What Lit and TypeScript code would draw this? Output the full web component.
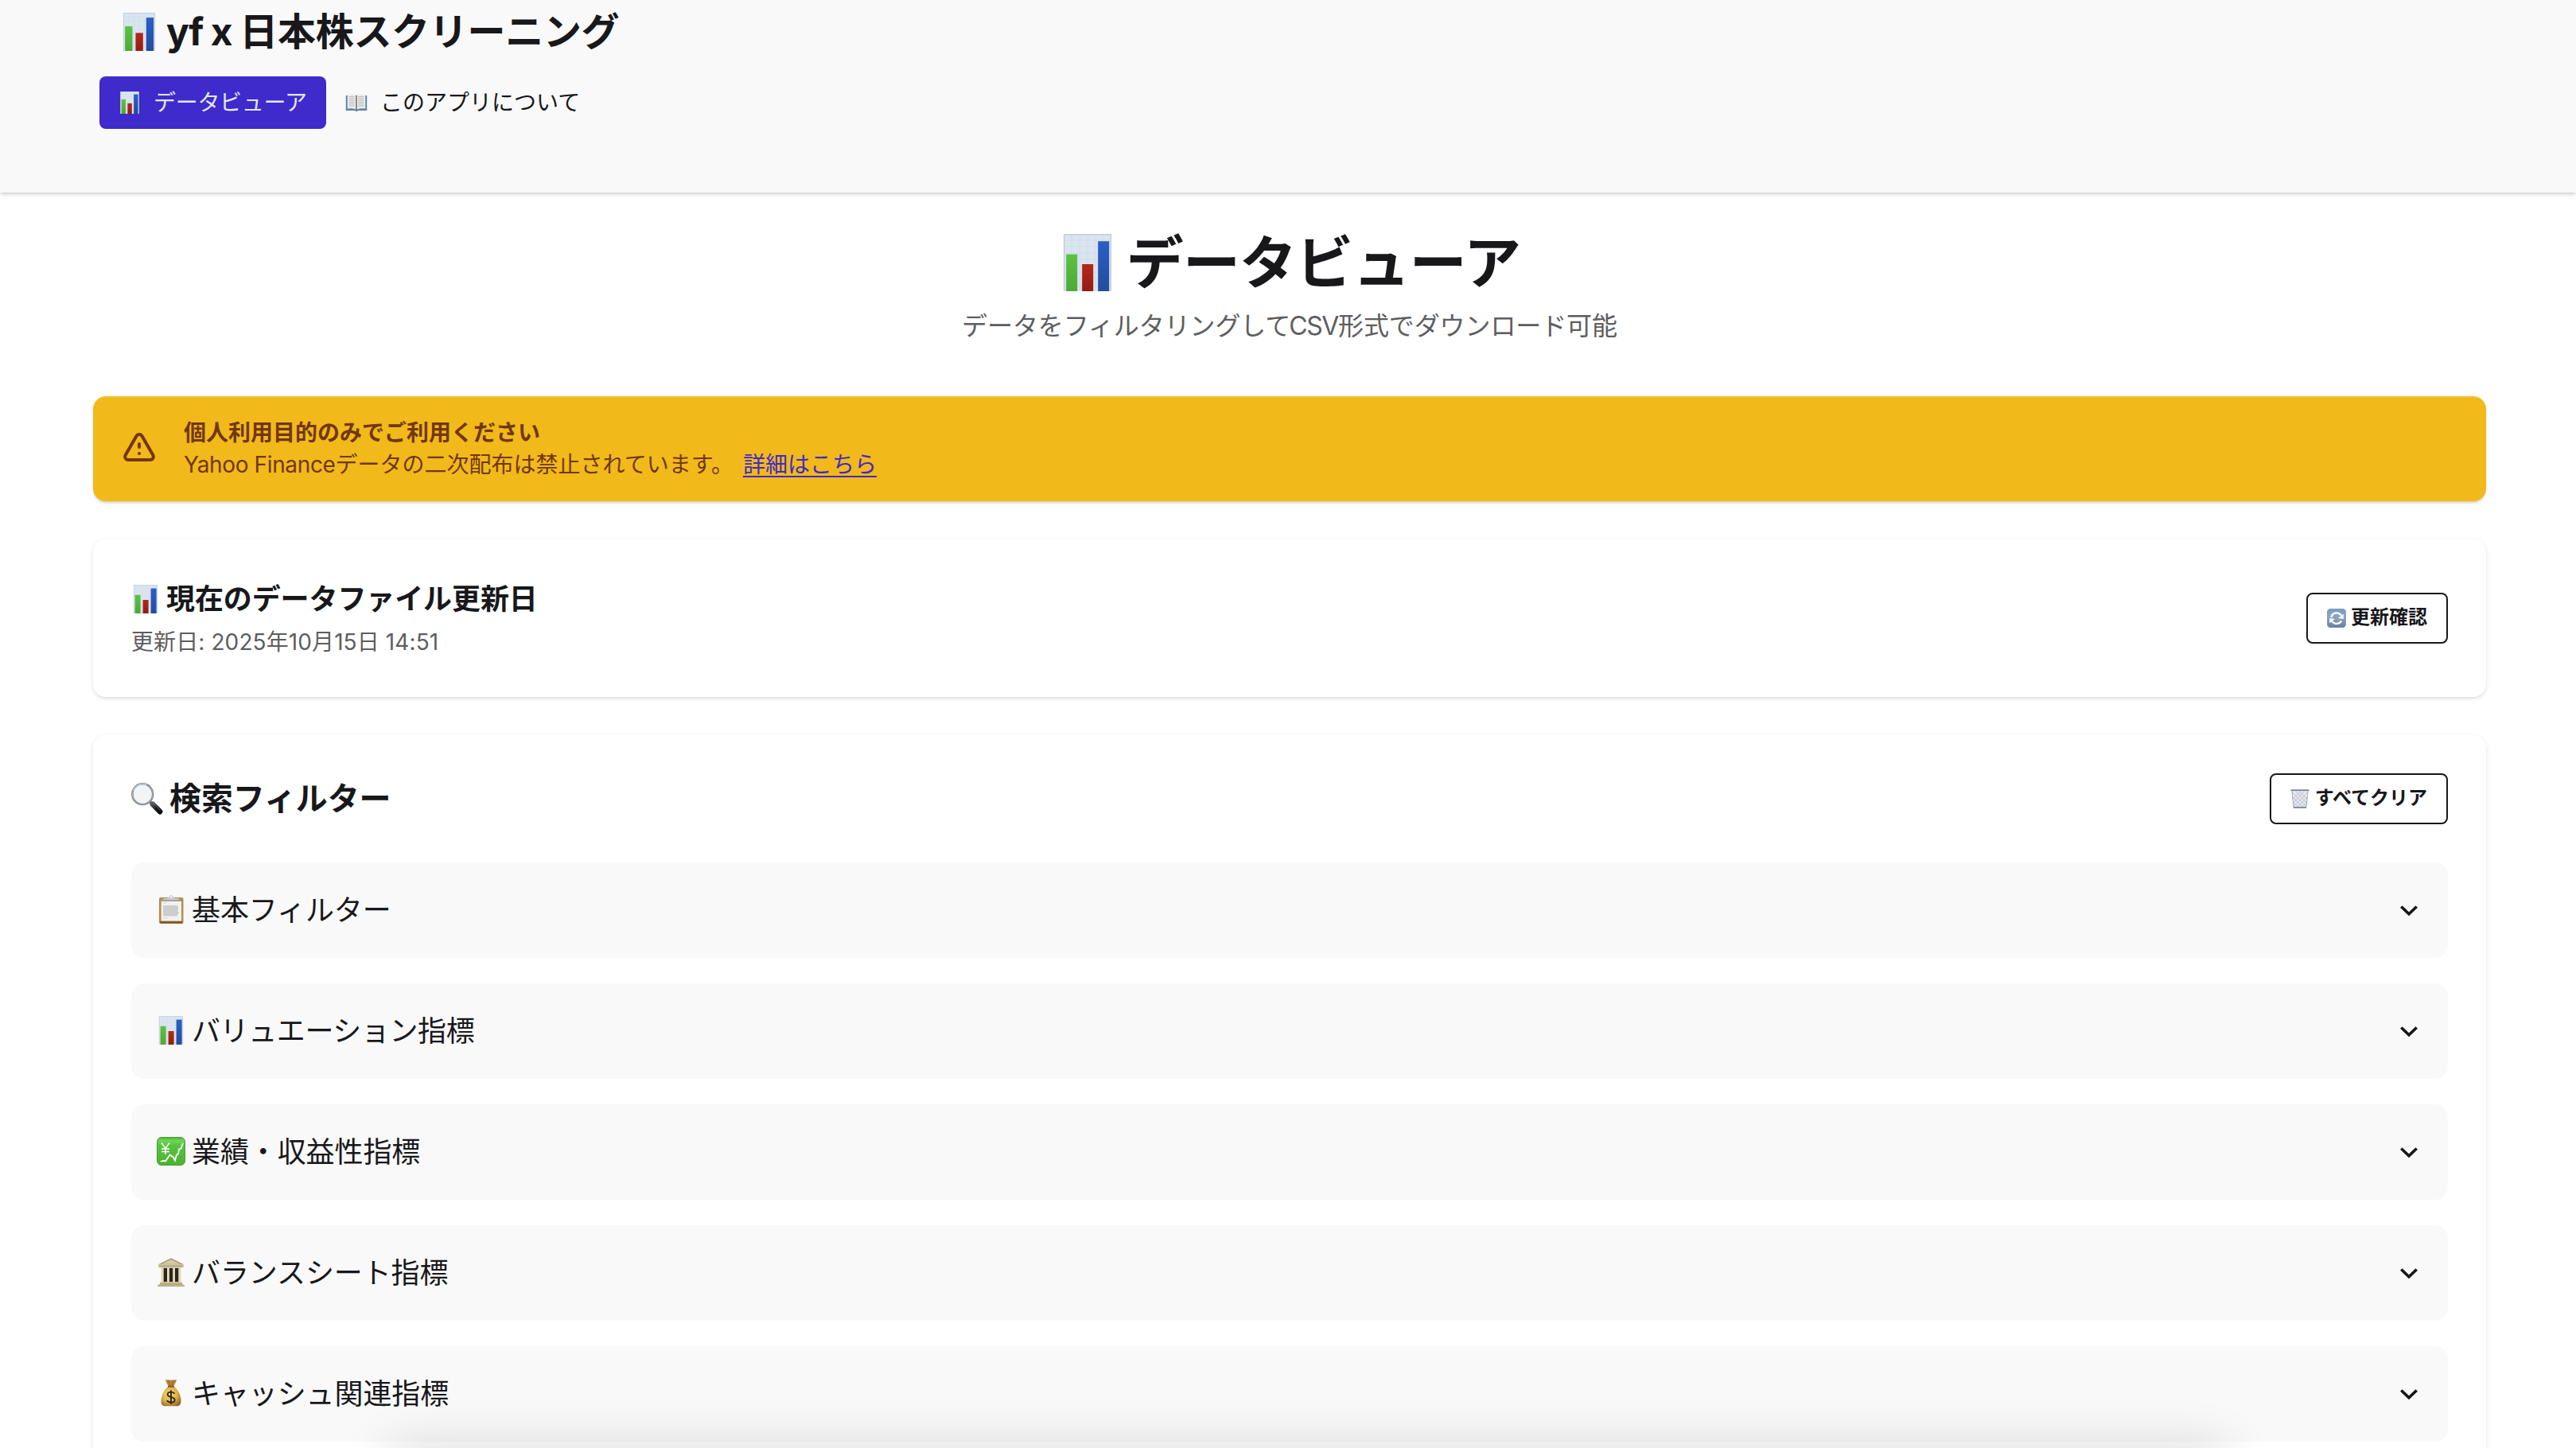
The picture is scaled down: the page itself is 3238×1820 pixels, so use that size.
import { LitElement, html, css, svg, nothing } from "lit";
import { customElement, property } from "lit/decorators.js";
import { classMap } from "lit/directives/class-map.js";

type IconName = "chart" | "book" | "refresh" | "trash" | "search" | "clipboard" | "yen" | "bank" | "money";

/* Every icon is drawn on a 36 x 36 grid. */
const ICONS: Record<IconName, unknown> = {
  chart: svg`
    <rect x="3" y="0" width="30" height="36" fill="#dbe5f0"/>
    <path d="M3 4h30M3 8h30M3 12h30M3 16h30M3 20h30M3 24h30M3 28h30M3 32h30M8 0v36M13 0v36M18 0v36M23 0v36M28 0v36" stroke="#cbdbeb" stroke-width=".4"/>
    <path d="M3.3 36V.4H32.7V36" fill="none" stroke="#c3ccd6" stroke-width=".7"/>
    <rect x="4.6" y="12.8" width="7" height="23.2" fill="url(#g)"/>
    <rect x="14.6" y="19" width="7" height="17" fill="url(#r)"/>
    <rect x="24.6" y="4.6" width="7" height="31.4" fill="url(#b)"/>
    <defs>
      <linearGradient id="g" x2="0" y2="1"><stop stop-color="#59c441"/><stop offset="1" stop-color="#4fa837"/></linearGradient>
      <linearGradient id="r" x2="0" y2="1"><stop stop-color="#b5281a"/><stop offset="1" stop-color="#941c12"/></linearGradient>
      <linearGradient id="b" x2="0" y2="1"><stop stop-color="#2a5fc9"/><stop offset="1" stop-color="#234c9c"/></linearGradient>
    </defs>`,
  book: svg`
    <path d="M1 6.500h34v24.500H21l-3 1.500-3-1.500H1z" fill="#4f88ae"/>
    <path d="M3.500 5c5-1 10.500-1 14.500 1 4-2 9.500-2 14.500-1v23c-5-.800-10.500-.800-14.500 1.500C14 27.200 8.500 27.200 3.500 28z" fill="#eeedec"/>
    <path d="M3.500 28.500c5-1 10.500-.800 14.500 1.500 4-2.300 9.500-2.500 14.500-1.500" fill="none" stroke="#85888b" stroke-width="1.400"/>
    <path d="M18 6v24" stroke="#6f6f6f" stroke-width="2"/>
    <path d="M6 8.500q5-1 9 0M6 11.500q5-1 9 0M6 14.500q5-1 9 0M6 17.500q5-1 9 0M6 20.500q5-1 9 0M6 23.500q5-1 9 0M21 8.500q5-1 9 0M21 11.500q5-1 9 0M21 14.500q5-1 9 0M21 17.500q5-1 9 0M21 20.500q5-1 9 0M21 23.500q5-1 9 0" stroke="#b0b0b0" fill="none" stroke-width="1.200"/>`,
  refresh: svg`
    <defs><linearGradient id="f" x2="0" y2="1"><stop stop-color="#7c9cc2"/><stop offset=".45" stop-color="#8ba5c3"/><stop offset="1" stop-color="#667f9f"/></linearGradient></defs>
    <rect x=".5" y=".5" width="35" height="35" rx="6.500" fill="url(#f)" stroke="#6885a8"/>
    <path d="M9 13C12.500 7 22 6 27 13M27 23C23.500 29.500 14 30.500 9 23.500" fill="none" stroke="#fff" stroke-width="3.600"/>
    <path d="M31.500 9.500l-.500 9.500-10-1.500zM4.500 27l.500-9.500 10 1.500z" fill="#fff" transform="translate(0 .500)"/>
    <path d="M6.500 16c.500-3 2-5 4-6.500l2 3c-1.300 1-2 2-2.500 4z" fill="#fff"/>`,
  trash: svg`
    <path d="M2 2h32l-3.500 33H5.500z" fill="#e8eaee"/>
    <path d="M4 6l26 27M4 14l19 20M10 4l21 22M17 4l15 15M5 24l11 11M32 6L6 33M32 14L13 34M26 4L5 26M19 4L4 19M31 24L20 35" stroke="#a5abb3" stroke-width="1"/>
    <path d="M3 3l3 31h24l3-31" fill="none" stroke="#a0a8b4" stroke-width="1.400"/>
    <path d="M.800 1.800h34.400" stroke="#7787a0" stroke-width="2.800"/>
    <path d="M6 34.500h24" stroke="#75869e" stroke-width="2.600"/>`,
  search: svg`
    <defs><linearGradient id="h" x2="1" y2="1"><stop stop-color="#56595f"/><stop offset=".5" stop-color="#1d1f23"/><stop offset="1" stop-color="#0c0d0f"/></linearGradient></defs>
    <path d="M21 21l4 4" stroke="#85898f" stroke-width="2.500"/>
    <path d="M24 24l8.500 8.500" stroke="url(#h)" stroke-width="6" stroke-linecap="round"/>
    <path d="M24.500 22.500l8.500 8.500" stroke="#74777d" stroke-width=".800"/>
    <circle cx="12.800" cy="12.800" r="11.600" fill="#f3f4f5" stroke="#74787f" stroke-width="2.200"/>
    <path d="M2.500 8.500A11.600 11.600 0 0117 2" fill="none" stroke="#b5c9e8" stroke-width="1.400"/>
    <circle cx="12.800" cy="12.800" r="11.600" fill="none" stroke="#d5dae2" stroke-width=".600"/>`,
  clipboard: svg`
    <rect x="3" y="3" width="30.500" height="33" rx="2" fill="#b58b4c"/>
    <rect x="4" y="33.300" width="28.500" height="2.300" rx="1" fill="#7c5227"/>
    <rect x="5.600" y="5.500" width="25.400" height="27" fill="#f1f1f1"/>
    <path d="M5.600 5.500h25.400v2.200H5.600z" fill="#8e8a84"/>
    <path d="M8 13h18v2h1v3h-.500v3h1v3H26v2.500H8z" fill="#cdcdcd"/>
    <path d="M8 10h4M8 29h6" stroke="#d4d4d4" stroke-width="1"/>
    <path d="M8 6.200V4.400c3 0 6-.400 7.500-1.400a2.700 2.700 0 015 0c1.500 1 4.500 1.400 7.500 1.400v1.800z" fill="#c9d0d9"/>
    <circle cx="18" cy="2.600" r="1.900" fill="#f7f7f7" stroke="#b3bfce" stroke-width="1"/>`,
  yen: svg`
    <defs><linearGradient id="y" x2="0" y2="1"><stop stop-color="#4fb437"/><stop offset=".12" stop-color="#6fd457"/><stop offset=".3" stop-color="#56c33e"/><stop offset="1" stop-color="#4eb133"/></linearGradient></defs>
    <rect x=".5" y=".5" width="35" height="35" rx="5.500" fill="url(#y)" stroke="#4a9f33"/>
    <path d="M6 7.500l5 7 5-7M11 14.500V22M6 15h10M6 18.500h10" fill="none" stroke="#fff" stroke-width="1.500"/>
    <path d="M5 31l3-1 3 .500 5.500-8 4.500 3 2 4 2-7 2-1 1-6 2.500-1L33 8" fill="none" stroke="#fff" stroke-width="1.800"/>`,
  bank: svg`
    <path d="M6 12h24v20H6z" fill="#c5bb95"/>
    <path d="M8.500 13h4.500v17H8.500zM15.800 13h4.500v17h-4.500zM23 13h4.500v17H23z" fill="#2b261c"/>
    <path d="M13 12h2.800v19H13zM20.300 12H23v19h-2.700zM5.500 12h3v19h-3zM27.500 12h3v19h-3z" fill="#e2dbbc"/>
    <path d="M18 .200L34.500 8.500H1.500z" fill="#a89c74"/>
    <path d="M18 2.200L29.500 7.800H6.500z" fill="#d6cda8"/>
    <path d="M2.500 8.500h31v3.800h-31z" fill="#cdc39c"/><path d="M2.500 10.200h31" stroke="#978b64" stroke-width=".800"/>
    <path d="M4 30.500h28V33h1.500v1H35v2H1v-2h1.500v-1H4z" fill="#c8be97"/>
    <path d="M4 33h28M1 35.800h34" stroke="#8f835b" stroke-width=".800"/>`,
  money: svg`
    <defs><radialGradient id="m" cx=".42" cy=".4" r=".65"><stop stop-color="#f3dc76"/><stop offset=".6" stop-color="#dcb148"/><stop offset="1" stop-color="#9c6c2a"/></radialGradient></defs>
    <path d="M11 .800c3 1.400 4 .200 7 1 3-.800 4 .400 7-1-.500 4-3 6-3.500 9h-7C14 7 11.500 5 11 .800z" fill="#bd8539"/>
    <path d="M15 2l2 7M21 2l-1.800 7" stroke="#7f5421" stroke-width=".800"/>
    <path d="M14.500 9.500h7C26 13 30.500 20 30.500 28c0 4.500-2 6.300-5 6.300H10.500c-3 0-5-1.800-5-6.300 0-8 4.500-15 9-18.500z" fill="url(#m)"/>
    <path d="M14 9.800h8" stroke="#87592a" stroke-width="1.800"/>
    <path d="M22.500 18.800c-1-1.600-2.500-2.200-4.500-2.200-2.700 0-4.300 1.300-4.300 3.200 0 4.500 9 2 9 6.600 0 2-1.800 3.300-4.700 3.300-2.300 0-4.200-.900-5-2.600M18 14.500v17.200" stroke="#2c2a24" stroke-width="1.900" fill="none"/>`,
};

@customElement("emoji-icon")
export class EmojiIcon extends LitElement {
  @property() name: IconName = "chart";
  static styles = css`
    :host { display: block; flex: none; width: 36px; height: 36px; }
    .art { display: block; width: 100%; height: 100%; }
  `;
  render() {
    return html`<svg class="art" viewBox="0 0 36 36" preserveAspectRatio="none" fill="none">${ICONS[this.name] ?? nothing}</svg>`;
  }
}

@customElement("filter-row")
export class FilterRow extends LitElement {
  @property() icon: IconName = "chart";
  @property() label = "";
  @property({ type: Boolean }) tight = false;
  static styles = css`
    :host { display: block; }
    .row {
      box-sizing: border-box; height: 120px; padding: 0 38px 0 32px; border-radius: 16px;
      background: #f9f9f9; display: flex; align-items: center; gap: 8px;
      font-size: 36px; line-height: 56px;
    }
    .icon { margin-bottom: 2px; }
    .label { flex: 1; letter-spacing: -.1px; }
    .label.tight { letter-spacing: -.4px; }
    .chevron { width: 22px; height: 14px; margin-top: 2px; }
  `;
  render() {
    return html`<div class="row">
      <emoji-icon class="icon" name=${this.icon}></emoji-icon>
      <span class=${classMap({ label: true, tight: this.tight })}>${this.label}</span>
      <svg class="chevron" viewBox="0 0 22 14" fill="none"><path d="M1.300 1.500L11 10.800l9.700-9.300" stroke="#18181b" stroke-width="3.700"/></svg>
    </div>`;
  }
}

const FILTERS: { icon: IconName; label: string; tight?: boolean }[] = [
  { icon: "clipboard", label: "基本フィルター" },
  { icon: "chart", label: "バリュエーション指標", tight: true },
  { icon: "yen", label: "業績・収益性指標" },
  { icon: "bank", label: "バランスシート指標" },
  { icon: "money", label: "キャッシュ関連指標" },
];

@customElement("app-root")
export class AppRoot extends LitElement {
  static styles = css`
    :host {
      display: block; position: relative; height: 1820px; overflow: hidden; background: #fff; color: #18181b;
      font-family: Inter, "Noto Sans CJK JP", sans-serif;
      font-size: 28px; line-height: 40px; white-space: nowrap;
    }
    h1, h2, h3, p { margin: 0; }
    .header {
      box-sizing: border-box; height: 242px; background: #f9f9f9; padding-left: 125px;
      box-shadow: 0 2px 6px rgba(0,0,0,.12), 0 2px 4px -1px rgba(0,0,0,.14);
    }
    .brand { display: flex; align-items: center; height: 80px; padding-left: 26px; font-size: 48px; font-weight: 700; gap: 10px; }
    .brand-icon { width: 48px; height: 48px; }
    .brand-text { letter-spacing: -.3px; }
    .brand-latin { letter-spacing: -1.4px; }
    .nav { display: flex; gap: 24px; margin-top: 16px; }
    .tab { display: flex; align-items: center; height: 66px; gap: 16px; }
    .tab.active { background: #3f2acb; color: #e0e7ff; border-radius: 8px; padding: 0 24px; width: 237px; letter-spacing: -.011em; }
    .tab-icon { width: 28px; height: 28px; }

    .main { padding: 0 113px 0 117px; }
    .hero { padding-top: 46px; display: flex; flex-direction: column; align-items: center; height: 256px; box-sizing: border-box; }
    .hero-title { display: flex; align-items: center; gap: 13px; font-size: 72px; line-height: 84px; font-weight: 700; letter-spacing: -.011em; }
    .hero-icon { width: 72px; height: 72px; }
    .hero-sub { font-size: 32px; line-height: 48px; margin-top: 14px; color: #5e5e60; letter-spacing: -.1px; }
    .csv { letter-spacing: -1.400px; margin-left: -2px; }

    .alert {
      box-sizing: border-box; height: 132px; border-radius: 16px; background: #f1b91a; color: #733610;
      padding: 0 34px; display: flex; align-items: center; gap: 32px;
      box-shadow: inset 0 2px 0 rgba(255,255,255,.08), 0 3px 2px -1px rgba(160,110,10,.2), 0 4px 6px -2px rgba(0,0,0,.1);
    }
    .alert-icon { width: 48px; height: 48px; flex: none; }
    .alert-title { font-size: 28px; line-height: 40px; font-weight: 700; }
    .link { color: #3f2acb; text-decoration: underline; text-underline-offset: 4px; text-decoration-thickness: 2px; margin-left: 12px; }
    .latin { letter-spacing: -.36px; }

    .card {
      box-sizing: border-box; margin-top: 48px; border-radius: 16px; background: #fff; padding: 48px;
      box-shadow: 0 2px 6px rgba(0,0,0,.1), 0 2px 4px -2px rgba(0,0,0,.1);
    }
    .status { height: 198px; display: flex; align-items: center; justify-content: space-between; }
    .line { display: flex; align-items: center; }
    .status-title { font-size: 36px; line-height: 52px; gap: 8px; font-weight: 700; letter-spacing: -.1px; }
    .status-date { color: #5e5e60; margin-top: 8px; letter-spacing: .1px; }
    .filters { height: 1000px; }
    .filters-head { display: flex; align-items: center; justify-content: space-between; height: 64px; margin-top: 0; }
    .filters-title { font-size: 40px; line-height: 56px; gap: 8px; font-weight: 700; letter-spacing: -.1px; }
    .filters-icon { width: 40px; height: 40px; }
    .button {
      box-sizing: border-box; height: 64px; border: 2px solid #18181b; border-radius: 8px; padding: 0 24px;
      display: flex; align-items: center; gap: 6px; font-family: inherit; font-size: 24px; line-height: 36px; font-weight: 700;
      color: inherit; background: transparent;
    }
    .button.wide { gap: 7px; }
    .button-icon { width: 24px; height: 24px; }
    .button-label { margin-bottom: 3px; }
    .list { display: flex; flex-direction: column; gap: 32px; margin-top: 48px; }
    .edge-shadow {
      position: absolute; left: 490px; right: 440px; bottom: -50px; height: 46px; border-radius: 20px;
      box-shadow: 0 0 64px 4px rgba(0,0,0,.16);
    }
  `;

  render() {
    return html`
      <header class="header">
        <div class="brand"><emoji-icon class="brand-icon" name="chart"></emoji-icon><span class="brand-text"><span class="brand-latin">yf x </span>日本株スクリーニング</span></div>
        <nav class="nav">
          <div class="tab active"><emoji-icon class="tab-icon" name="chart"></emoji-icon><span>データビューア</span></div>
          <div class="tab"><emoji-icon class="tab-icon" name="book"></emoji-icon><span>このアプリについて</span></div>
        </nav>
      </header>
      <main class="main">
        <section class="hero">
          <h1 class="hero-title"><emoji-icon class="hero-icon" name="chart"></emoji-icon><span>データビューア</span></h1>
          <p class="hero-sub">データをフィルタリングして<span class="csv">CSV</span>形式でダウンロード可能</p>
        </section>
        <section class="alert">
          <svg class="alert-icon" viewBox="0 0 24 24" fill="none" stroke="currentColor" stroke-width="2" stroke-linecap="round" stroke-linejoin="round">
            <path d="M12 9v2m0 4h.01m-6.938 4h13.856c1.540 0 2.502-1.667 1.732-3L13.732 4c-.770-1.333-2.694-1.333-3.464 0L3.340 16c-.770 1.333.192 3 1.732 3z"/>
          </svg>
          <div>
            <h3 class="alert-title">個人利用目的のみでご利用ください</h3>
            <p><span class="latin">Yahoo Finance</span>データの二次配布は禁止されています。<a class="link">詳細はこちら</a></p>
          </div>
        </section>
        <section class="card status">
          <div>
            <h2 class="line status-title"><emoji-icon name="chart"></emoji-icon><span>現在のデータファイル更新日</span></h2>
            <p class="status-date">更新日: 2025年10月15日 14:51</p>
          </div>
          <button class="button"><emoji-icon class="button-icon" name="refresh"></emoji-icon><span class="button-label">更新確認</span></button>
        </section>
        <section class="card filters">
          <div class="filters-head">
            <h2 class="line filters-title"><emoji-icon class="filters-icon" name="search"></emoji-icon><span>検索フィルター</span></h2>
            <button class="button wide"><emoji-icon class="button-icon" name="trash"></emoji-icon><span class="button-label">すべてクリア</span></button>
          </div>
          <div class="list">
            ${FILTERS.map((f) => html`<filter-row icon=${f.icon} label=${f.label} ?tight=${f.tight}></filter-row>`)}
          </div>
        </section>
      </main>
      <div class="edge-shadow"></div>
    `;
  }
}
